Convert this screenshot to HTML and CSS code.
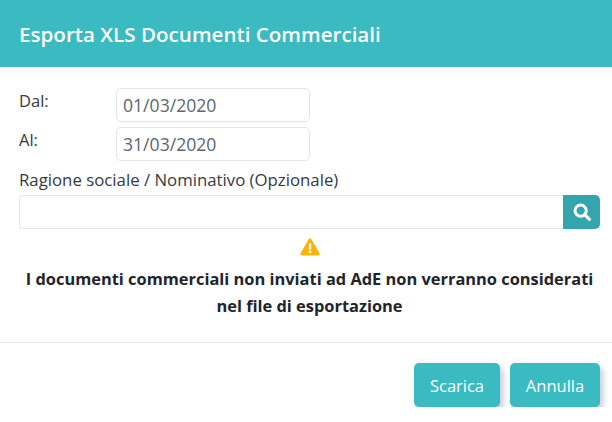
FILE: index.html
```html
<!DOCTYPE html>
<html lang="en">

<head>
    <meta charset="UTF-8">
    <meta name="viewport" content="width=device-width, initial-scale=1.0">
    <title>Esporta XLS</title>
    <link rel="stylesheet" href="styles.css">
</head>

<body>
    <div class="modal">
        <div class="modal-header">
            <h5 class="modal-title">Esporta XLS Documenti Commerciali</h5>
        </div>
        <div class="modal-body">
            <div class="date-row">
                <label class="date-label" for="dal">Dal:</label>
                <input class="field date-input" id="dal" type="text" value="01/03/2020">
            </div>
            <div class="date-row">
                <label class="date-label" for="al">Al:</label>
                <input class="field date-input" id="al" type="text" value="31/03/2020">
            </div>
            <label class="name-label" for="nominativo">Ragione sociale / Nominativo (Opzionale)</label>
            <div class="search-group">
                <input class="field search-input" id="nominativo" type="text">
                <button class="search-btn" type="button" aria-label="Cerca">
                    <svg width="18" height="18" viewBox="0 0 16 16">
                        <circle cx="6.8" cy="6.8" r="5" fill="none" stroke="#fff" stroke-width="2.6" />
                        <path d="M10.6 10.6 L14.6 14.6" stroke="#fff" stroke-width="2.8" stroke-linecap="round" />
                    </svg>
                </button>
            </div>
            <div class="notice">
                <svg class="notice-icon" width="20" height="18" viewBox="0 0 20 18">
                    <path d="M10 .6c.7 0 1.2.4 1.5 1l7.9 13.6c.6 1.100-.2 2.400-1.500 2.400H2.100C.8 17.600 0 16.300.6 15.200L8.500 1.600c.3-.6.800-1 1.500-1z" fill="#ffb300" />
                    <rect x="8.800" y="5.200" width="2.400" height="6.400" rx=".6" fill="#fff" />
                    <circle cx="10" cy="14" r="1.400" fill="#fff" />
                </svg>
                <p class="notice-text">I documenti commerciali non inviati ad AdE non verranno considerati<br>nel file di esportazione</p>
            </div>
        </div>
        <div class="modal-footer">
            <button class="btn btn-scarica" type="button">Scarica</button>
            <button class="btn btn-annulla" type="button">Annulla</button>
        </div>
    </div>
</body>

</html>
```

FILE: styles.css
```css
body {
    font-family: "Open Sans", "Noto Sans", sans-serif;
    margin: 0;
    background-color: #fff;
    color: #343a40;
    overflow: hidden;
}

.modal-header {
    height: 67px;
    padding: 0 19px;
    display: flex;
    align-items: center;
    background-color: #3abac1;
}

.modal-title {
    margin: 0;
    color: #fff;
    font-size: 20.6px;
    font-weight: 600;
}

.modal-body {
    padding: 21px 12px 0 19px;
    height: 254px;
}

.date-row {
    display: flex;
    align-items: flex-start;
    margin-bottom: 5px;
}

.date-label {
    width: 97px;
    font-size: 16.5px;
    line-height: 26px;
}

.field {
    box-sizing: border-box;
    border: 1px solid #e1e4e8;
    border-radius: 5px;
    font-family: inherit;
    font-size: 17.6px;
    color: #5c6670;
    outline: none;
}

.date-input {
    width: 194px;
    height: 34px;
    padding: 0 6px;
}

.name-label {
    display: block;
    margin-top: 6px;
    font-size: 16.8px;
    line-height: 25px;
}

.search-group {
    display: flex;
    height: 34px;
    margin-top: 3px;
}

.search-input {
    flex: 1;
    min-width: 0;
    border-right: none;
    border-radius: 5px 0 0 5px;
}

.search-btn {
    width: 37px;
    padding: 0;
    display: flex;
    align-items: center;
    justify-content: center;
    border: none;
    border-radius: 0 5px 5px 0;
    background-color: #32a6ac;
}

.notice {
    text-align: center;
    margin-top: 9px;
}

.notice-icon {
    display: block;
    margin: 0 auto;
}

.notice-text {
    margin: 9px -4px 0;
    color: #212529;
    font-size: 16.4px;
    font-weight: 700;
    line-height: 27px;
}

.modal-footer {
    display: flex;
    justify-content: flex-end;
    gap: 10px;
    padding: 20px 12px 0 0;
    border-top: 1px solid #e4e6e8;
}

.btn {
    height: 44px;
    border: none;
    border-radius: 5px;
    background-color: #3abac1;
    color: #fff;
    font-family: inherit;
    font-size: 16.5px;
    box-shadow: 3px 4px 6px rgba(120, 140, 170, 0.45);
}

.btn-scarica {
    width: 86px;
}

.btn-annulla {
    width: 90px;
}
```
